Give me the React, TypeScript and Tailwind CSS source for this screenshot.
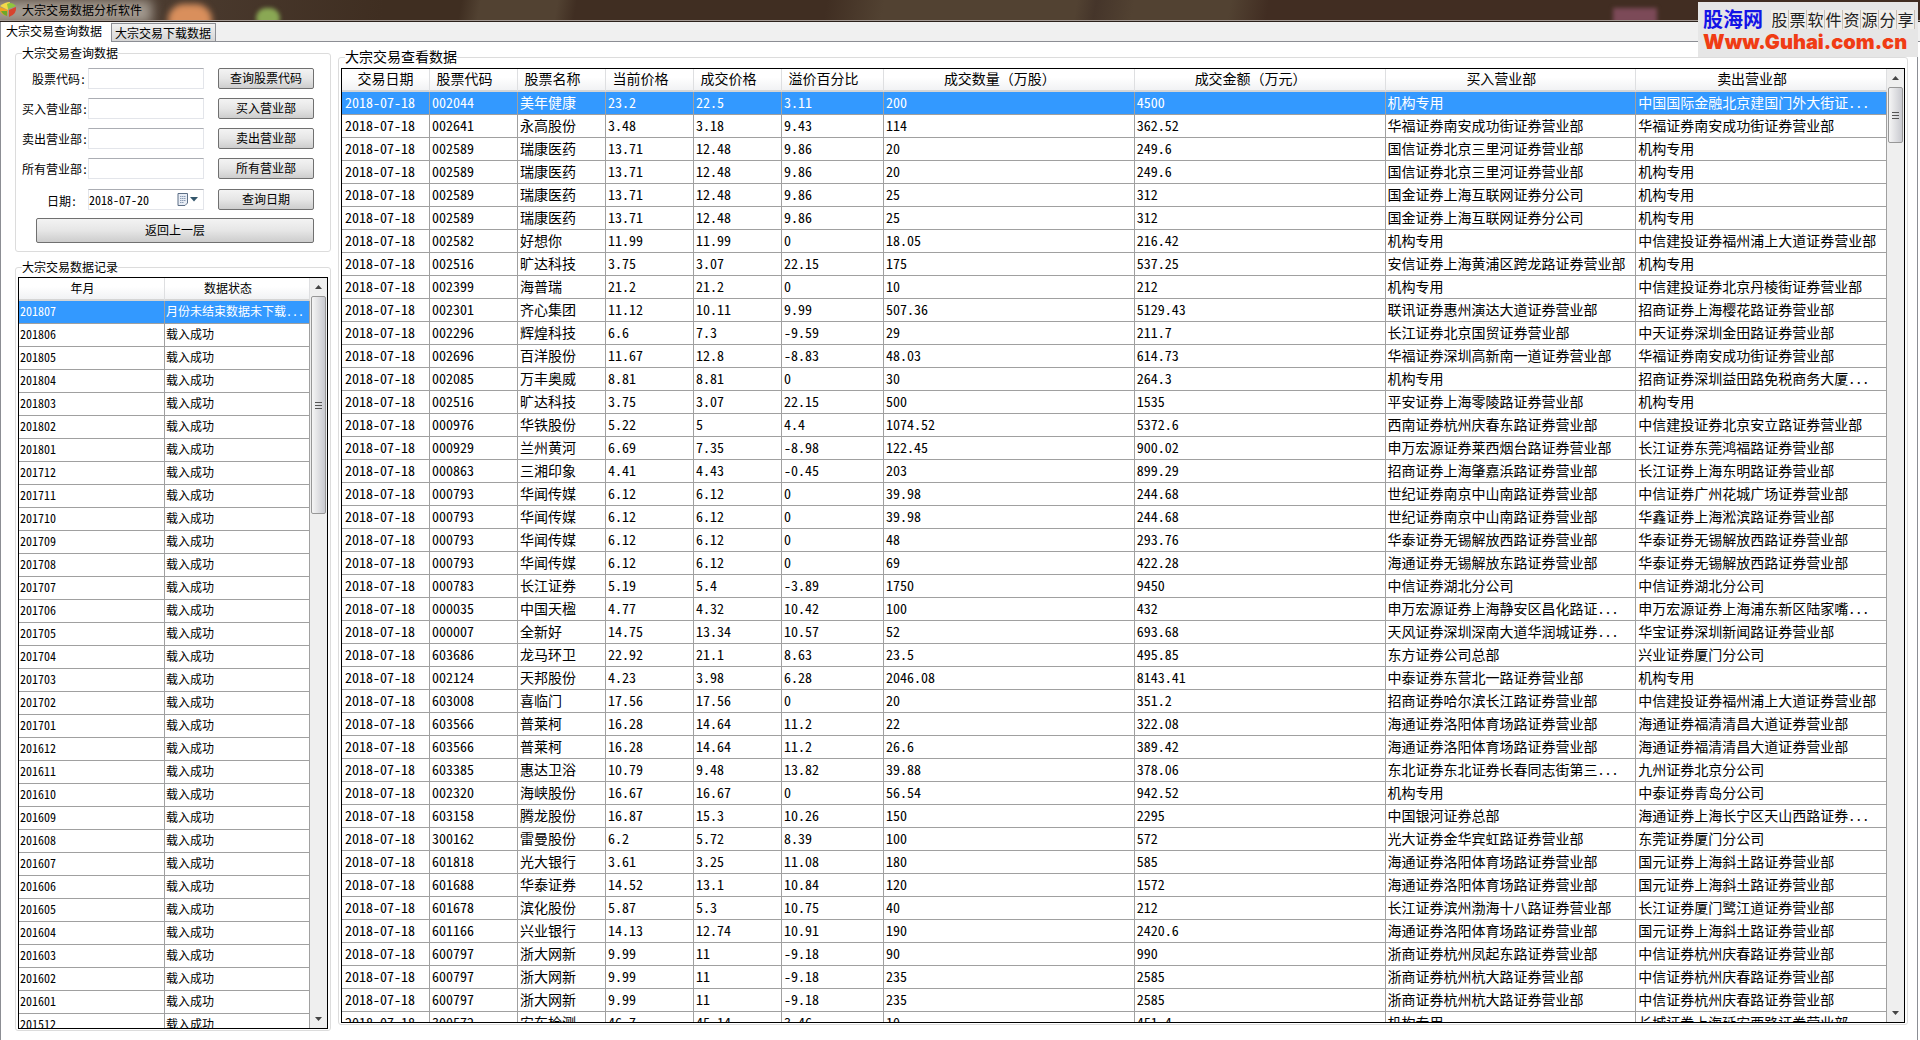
import { useState } from "react";

const TRADES: string[][] = [
  ["002044", "美年健康", "23.2", "22.5", "3.11", "200", "4500", "机构专用", "中国国际金融北京建国门外大街证..."],
  ["002641", "永高股份", "3.48", "3.18", "9.43", "114", "362.52", "华福证券南安成功街证券营业部", "华福证券南安成功街证券营业部"],
  ["002589", "瑞康医药", "13.71", "12.48", "9.86", "20", "249.6", "国信证券北京三里河证券营业部", "机构专用"],
  ["002589", "瑞康医药", "13.71", "12.48", "9.86", "20", "249.6", "国信证券北京三里河证券营业部", "机构专用"],
  ["002589", "瑞康医药", "13.71", "12.48", "9.86", "25", "312", "国金证券上海互联网证券分公司", "机构专用"],
  ["002589", "瑞康医药", "13.71", "12.48", "9.86", "25", "312", "国金证券上海互联网证券分公司", "机构专用"],
  ["002582", "好想你", "11.99", "11.99", "0", "18.05", "216.42", "机构专用", "中信建投证券福州浦上大道证券营业部"],
  ["002516", "旷达科技", "3.75", "3.07", "22.15", "175", "537.25", "安信证券上海黄浦区跨龙路证券营业部", "机构专用"],
  ["002399", "海普瑞", "21.2", "21.2", "0", "10", "212", "机构专用", "中信建投证券北京丹棱街证券营业部"],
  ["002301", "齐心集团", "11.12", "10.11", "9.99", "507.36", "5129.43", "联讯证券惠州演达大道证券营业部", "招商证券上海樱花路证券营业部"],
  ["002296", "辉煌科技", "6.6", "7.3", "-9.59", "29", "211.7", "长江证券北京国贸证券营业部", "中天证券深圳金田路证券营业部"],
  ["002696", "百洋股份", "11.67", "12.8", "-8.83", "48.03", "614.73", "华福证券深圳高新南一道证券营业部", "华福证券南安成功街证券营业部"],
  ["002085", "万丰奥威", "8.81", "8.81", "0", "30", "264.3", "机构专用", "招商证券深圳益田路免税商务大厦..."],
  ["002516", "旷达科技", "3.75", "3.07", "22.15", "500", "1535", "平安证券上海零陵路证券营业部", "机构专用"],
  ["000976", "华铁股份", "5.22", "5", "4.4", "1074.52", "5372.6", "西南证券杭州庆春东路证券营业部", "中信建投证券北京安立路证券营业部"],
  ["000929", "兰州黄河", "6.69", "7.35", "-8.98", "122.45", "900.02", "申万宏源证券莱西烟台路证券营业部", "长江证券东莞鸿福路证券营业部"],
  ["000863", "三湘印象", "4.41", "4.43", "-0.45", "203", "899.29", "招商证券上海肇嘉浜路证券营业部", "长江证券上海东明路证券营业部"],
  ["000793", "华闻传媒", "6.12", "6.12", "0", "39.98", "244.68", "世纪证券南京中山南路证券营业部", "中信证券广州花城广场证券营业部"],
  ["000793", "华闻传媒", "6.12", "6.12", "0", "39.98", "244.68", "世纪证券南京中山南路证券营业部", "华鑫证券上海淞滨路证券营业部"],
  ["000793", "华闻传媒", "6.12", "6.12", "0", "48", "293.76", "华泰证券无锡解放西路证券营业部", "华泰证券无锡解放西路证券营业部"],
  ["000793", "华闻传媒", "6.12", "6.12", "0", "69", "422.28", "海通证券无锡解放东路证券营业部", "华泰证券无锡解放西路证券营业部"],
  ["000783", "长江证券", "5.19", "5.4", "-3.89", "1750", "9450", "中信证券湖北分公司", "中信证券湖北分公司"],
  ["000035", "中国天楹", "4.77", "4.32", "10.42", "100", "432", "申万宏源证券上海静安区昌化路证...", "申万宏源证券上海浦东新区陆家嘴..."],
  ["000007", "全新好", "14.75", "13.34", "10.57", "52", "693.68", "天风证券深圳深南大道华润城证券...", "华宝证券深圳新闻路证券营业部"],
  ["603686", "龙马环卫", "22.92", "21.1", "8.63", "23.5", "495.85", "东方证券公司总部", "兴业证券厦门分公司"],
  ["002124", "天邦股份", "4.23", "3.98", "6.28", "2046.08", "8143.41", "中泰证券东营北一路证券营业部", "机构专用"],
  ["603008", "喜临门", "17.56", "17.56", "0", "20", "351.2", "招商证券哈尔滨长江路证券营业部", "中信建投证券福州浦上大道证券营业部"],
  ["603566", "普莱柯", "16.28", "14.64", "11.2", "22", "322.08", "海通证券洛阳体育场路证券营业部", "海通证券福清清昌大道证券营业部"],
  ["603566", "普莱柯", "16.28", "14.64", "11.2", "26.6", "389.42", "海通证券洛阳体育场路证券营业部", "海通证券福清清昌大道证券营业部"],
  ["603385", "惠达卫浴", "10.79", "9.48", "13.82", "39.88", "378.06", "东北证券东北证券长春同志街第三...", "九州证券北京分公司"],
  ["002320", "海峡股份", "16.67", "16.67", "0", "56.54", "942.52", "机构专用", "中泰证券青岛分公司"],
  ["603158", "腾龙股份", "16.87", "15.3", "10.26", "150", "2295", "中国银河证券总部", "海通证券上海长宁区天山西路证券..."],
  ["300162", "雷曼股份", "6.2", "5.72", "8.39", "100", "572", "光大证券金华宾虹路证券营业部", "东莞证券厦门分公司"],
  ["601818", "光大银行", "3.61", "3.25", "11.08", "180", "585", "海通证券洛阳体育场路证券营业部", "国元证券上海斜土路证券营业部"],
  ["601688", "华泰证券", "14.52", "13.1", "10.84", "120", "1572", "海通证券洛阳体育场路证券营业部", "国元证券上海斜土路证券营业部"],
  ["601678", "滨化股份", "5.87", "5.3", "10.75", "40", "212", "长江证券滨州渤海十八路证券营业部", "长江证券厦门鹭江道证券营业部"],
  ["601166", "兴业银行", "14.13", "12.74", "10.91", "190", "2420.6", "海通证券洛阳体育场路证券营业部", "国元证券上海斜土路证券营业部"],
  ["600797", "浙大网新", "9.99", "11", "-9.18", "90", "990", "浙商证券杭州凤起东路证券营业部", "中信证券杭州庆春路证券营业部"],
  ["600797", "浙大网新", "9.99", "11", "-9.18", "235", "2585", "浙商证券杭州杭大路证券营业部", "中信证券杭州庆春路证券营业部"],
  ["600797", "浙大网新", "9.99", "11", "-9.18", "235", "2585", "浙商证券杭州杭大路证券营业部", "中信证券杭州庆春路证券营业部"],
  ["300572", "安车检测", "46.7", "45.14", "3.46", "10", "451.4", "机构专用", "长城证券上海延安西路证券营业部"],
];

const TRADE_COLUMNS = [
  { label: "交易日期", width: "w-[88px]" },
  { label: "股票代码", width: "w-[88px]" },
  { label: "股票名称", width: "w-[88px]" },
  { label: "当前价格", width: "w-[88px]" },
  { label: "成交价格", width: "w-[88px]" },
  { label: "溢价百分比", width: "w-[102px]" },
  { label: "成交数量（万股）", width: "" },
  { label: "成交金额（万元）", width: "" },
  { label: "买入营业部", width: "" },
  { label: "卖出营业部", width: "" },
];

const MONTHS = [
  "201807", "201806", "201805", "201804", "201803", "201802", "201801",
  "201712", "201711", "201710", "201709", "201708", "201707", "201706",
  "201705", "201704", "201703", "201702", "201701", "201612", "201611",
  "201610", "201609", "201608", "201607", "201606", "201605", "201604",
  "201603", "201602", "201601", "201512",
];

const QUERIES = [
  { id: "code", label: "股票代码:", action: "查询股票代码" },
  { id: "buyer", label: "买入营业部:", action: "买入营业部" },
  { id: "seller", label: "卖出营业部:", action: "卖出营业部" },
  { id: "all", label: "所有营业部:", action: "所有营业部" },
];

const buttonClass =
  "rounded-[2px] border border-[#707070] bg-linear-to-b from-[#f3f3f3] from-0% via-[#e6e6e6] via-50% to-[#cdcdcd] pb-[2px] text-center leading-4";
const inputClass =
  "h-[21px] w-full min-w-0 border border-[#e3e5ea] border-t-[#abadb3] bg-white px-px outline-none";
const headClass =
  "h-[23px] border-r border-b-2 border-r-[#dedfe1] border-b-[#d5d5d5] bg-linear-to-b from-white from-40% to-[#f1f2f4] pt-0 pb-[2px] pl-0 font-normal leading-[19px]";
const cellClass =
  "h-[23px] overflow-hidden border-r border-b border-[#a0a0a0] pt-0 pr-0 pb-[2px] leading-5 whitespace-nowrap";

function AppIcon() {
  return (
    <svg width="17" height="16" viewBox="0 0 17 16" aria-hidden="true">
      <path d="M0 5 L8 8 L7 14 Q2 13 0 9 Z" fill="#f0a020" />
      <path d="M0 4 Q5 0 10 0 L8 8 Z" fill="#f4d94a" />
      <path d="M7 2 Q12 -1 16 4 L8 7 Z" fill="#8fc63d" />
      <path d="M9 8 L16 5 Q17 12 9 15 Z" fill="#d8432e" />
      <path d="M1 9 L7 9 L7 14 Q3 13 1 9 Z" fill="#6aa82c" />
    </svg>
  );
}

function CalendarIcon() {
  return (
    <svg className="shrink-0" width="22" height="13" viewBox="0 0 22 13" aria-hidden="true">
      <path d="M1 .5 H10.500 V10 L8 12.500 H1 Z" fill="#e8edf5" stroke="#5d6f86" />
      <path d="M3 3.500 H9 M3 5.500 H9 M3 7.500 H9 M3 9.500 H7" stroke="#8c9db5" strokeDasharray="1.500 .5" />
      <path d="M13 4 H21 L17 8.500 Z" fill="#33566b" />
    </svg>
  );
}

function ScrollBar({ thumb }: { thumb: string }) {
  return (
    <div className="flex w-[17px] shrink-0 flex-col items-center bg-[#efefef] px-px">
      <svg className="my-[5px] shrink-0" width="7" height="8" viewBox="0 0 7 8" aria-hidden="true">
        <path d="M0 6 L3.500 2 L7 6 Z" fill="#444" />
      </svg>
      <div
        className={`${thumb} flex w-full shrink-0 flex-col items-center justify-center gap-[2px] rounded-[2px] border border-[#979797] bg-linear-to-r from-[#f5f5f5] to-[#c9cad0]`}
      >
        <span className="h-px w-[7px] bg-[#555]" />
        <span className="h-px w-[7px] bg-[#555]" />
        <span className="h-px w-[7px] bg-[#555]" />
      </div>
      <svg className="mt-auto mb-[5px] shrink-0" width="7" height="8" viewBox="0 0 7 8" aria-hidden="true">
        <path d="M0 2 L3.500 6 L7 2 Z" fill="#444" />
      </svg>
    </div>
  );
}

function TitleBar() {
  return (
    <header className="relative h-[22px] shrink-0 overflow-hidden border-b border-[#2b211b] bg-[#423023]">
      {/* Desktop showing through the glass */}
      <div className="absolute inset-0 bg-[linear-gradient(100deg,#54453a_0%,#3f2e21_20%,#3f2e21_24%,#524232_25%,#524232_29%,#402e22_30%,#402e22_43%,#524232_46%,#524232_56%,#45352a_57%,#524232_59%,#524232_64%,#412d22_66%,#412d22_100%)]" />
      <div className="absolute top-0 -left-4 h-6 w-[168px] bg-[#a39a90] blur-[6px]" />
      <div className="absolute top-1 left-[168px] h-8 w-[44px] rounded-full bg-[#d98f5c] blur-[3px]" />
      <div className="absolute top-2 left-[256px] h-5 w-[24px] rounded-full bg-[#8aa854] blur-[2px]" />
      <div className="absolute top-2 left-[84%] h-4 w-[44px] bg-[#7c4a58] blur-[2px]" />
      <div className="relative flex h-[21px] items-center gap-[5px] border-b border-[#a39a94]">
        <AppIcon />
        <h1 className="text-xs leading-5 text-black">大宗交易数据分析软件</h1>
      </div>
    </header>
  );
}

function Watermark() {
  return (
    <div className="absolute top-[2px] right-[2px] flex h-[55px] w-[220px] flex-col bg-[#e6e6e6] pt-1 pl-[5px]">
      <div className="flex h-[26px] items-center gap-2">
        <span className="text-[20px] leading-[26px] font-bold text-[#1414e6]">股海网</span>
        <span className="flex bg-[#f0eeea] text-[#222]">
          {"股票软件资源分享".split("").map((char) => (
            <span key={char} className="w-[18px] border-r border-[#c9c0b8] text-center text-[16px] leading-[19px]">
              {char}
            </span>
          ))}
        </span>
      </div>
      <a
        href="#guhai"
        className="font-[Inter,'Liberation_Sans',sans-serif] text-[20px] leading-5 font-black text-[#f03c14]"
      >
        Www.Guhai.com.cn
      </a>
    </div>
  );
}

function QueryPanel({ onReset }: { onReset: () => void }) {
  const [date, setDate] = useState("2018-07-20");

  return (
    <fieldset className="rounded-[3px] border border-[#dcdcdc] pt-2 pr-[16px] pb-[8px] pl-[6px]">
      <legend className="pb-px leading-[13px]">大宗交易查询数据</legend>
      <div className="grid grid-cols-[66px_116px_96px] items-center gap-y-[9px]">
        {QUERIES.map((query) => (
          <div key={query.id} className="contents">
            <label htmlFor={query.id} className="pr-[2px] text-right leading-5 whitespace-nowrap">
              {query.label}
            </label>
            <input id={query.id} type="text" className={inputClass} />
            <button type="button" className={`${buttonClass} ml-[14px] h-[21px] w-[96px]`}>
              {query.action}
            </button>
          </div>
        ))}
        <label htmlFor="date" className="pt-[3px] pr-[11px] text-right leading-5">
          日期:
        </label>
        <div className="flex h-[21px] items-center border border-[#e3e5ea] border-t-[#abadb3] pr-1">
          <input
            id="date"
            type="text"
            value={date}
            onChange={(e) => setDate(e.target.value)}
            className="w-full min-w-0 outline-none"
          />
          <CalendarIcon />
        </div>
        <button type="button" className={`${buttonClass} ml-[14px] h-[21px] w-[96px]`}>
          查询日期
        </button>
      </div>
      <button
        type="button"
        onClick={onReset}
        className={`${buttonClass} mt-[7px] ml-[14px] block h-[25px] w-[278px]`}
      >
        返回上一层
      </button>
    </fieldset>
  );
}

function RecordPanel() {
  const [selected, setSelected] = useState(0);

  return (
    <fieldset className="flex min-h-0 flex-1 flex-col rounded-[3px] border border-[#dcdcdc] px-[2px] pt-[3px] pb-px">
      <legend className="ml-1 pb-px leading-[13px]">大宗交易数据记录</legend>
      <div className="flex min-h-0 flex-1 overflow-hidden border border-black">
        <div className="min-w-0 flex-1">
          <table className="w-full table-fixed border-separate border-spacing-0">
            <thead>
              <tr>
                <th className={`${headClass} w-[146px] pr-[18px]`}>年月</th>
                <th className={`${headClass} pr-[18px]`}>数据状态</th>
              </tr>
            </thead>
            <tbody>
              {MONTHS.map((month, i) => (
                <tr
                  key={month}
                  onClick={() => setSelected(i)}
                  className={i === selected ? "bg-[#3399ff] text-white" : ""}
                >
                  <td className={`${cellClass} pl-px`}>{month}</td>
                  <td className={`${cellClass} pl-px`}>{i === 0 ? "月份未结束数据未下载..." : "载入成功"}</td>
                </tr>
              ))}
            </tbody>
          </table>
        </div>
        <ScrollBar thumb="h-[218px]" />
      </div>
    </fieldset>
  );
}

function TradePanel({ selected, onSelect }: { selected: number; onSelect: (i: number) => void }) {
  return (
    <fieldset className="flex min-h-0 min-w-0 flex-1 flex-col rounded-[3px] border border-[#dcdcdc] px-[2px] pt-[3px] pb-px text-sm">
      <legend className="ml-1 pb-[2px] leading-[14px]">大宗交易查看数据</legend>
      <div className="flex min-h-0 flex-1 overflow-hidden border border-black">
        <div className="min-w-0 flex-1">
          <table className="w-full table-fixed border-separate border-spacing-0">
            <thead>
              <tr>
                {TRADE_COLUMNS.map((column, i) => (
                  <th
                    key={column.label}
                    className={`${headClass} ${column.width} ${i > 0 ? "pr-[18px]" : "pr-0"} whitespace-nowrap`}
                  >
                    {column.label}
                  </th>
                ))}
              </tr>
            </thead>
            <tbody>
              {TRADES.map((trade, i) => (
                <tr
                  key={i}
                  onClick={() => onSelect(i)}
                  className={i === selected ? "bg-[#3399ff] text-white" : ""}
                >
                  <td className={`${cellClass} pl-[3px]`}>2018-07-18</td>
                  {trade.map((value, j) => (
                    <td key={j} className={`${cellClass} pl-[2px]`}>
                      {value}
                    </td>
                  ))}
                </tr>
              ))}
            </tbody>
          </table>
        </div>
        <ScrollBar thumb="h-[56px]" />
      </div>
    </fieldset>
  );
}

export default function App() {
  const [selected, setSelected] = useState(0);

  return (
    <div className="relative flex h-screen flex-col overflow-hidden bg-white font-['Noto_Sans_Mono_CJK_SC','Noto_Sans_CJK_SC',sans-serif] text-xs text-black">
      <TitleBar />

      {/* Tabs */}
      <nav className="flex h-5 shrink-0 border-b border-[#8c8e94] bg-[#f0f0f0]">
        <button type="button" className="-mb-px w-[111px] border-l border-[#8c8e94] bg-white pr-1 pb-[2px] leading-[18px]">
          大宗交易查询数据
        </button>
        <button
          type="button"
          className="mt-px w-[105px] border border-b-0 border-[#8c8e94] bg-linear-to-b from-[#f0f0f0] to-[#d6d6d6] pr-px leading-[18px]"
        >
          大宗交易下载数据
        </button>
      </nav>

      <main className="mr-[2px] flex min-h-0 flex-1 border-x border-[#8c8e94] pl-[14px]">
        <div className="flex w-[316px] shrink-0 flex-col gap-2 pt-1 pb-[9px]">
          <QueryPanel onReset={() => setSelected(0)} />
          <RecordPanel />
        </div>
        <div className="flex min-w-0 flex-1 pt-[7px] pr-[9px] pb-[15px] pl-[7px]">
          <TradePanel selected={selected} onSelect={setSelected} />
        </div>
      </main>

      <Watermark />
    </div>
  );
}
